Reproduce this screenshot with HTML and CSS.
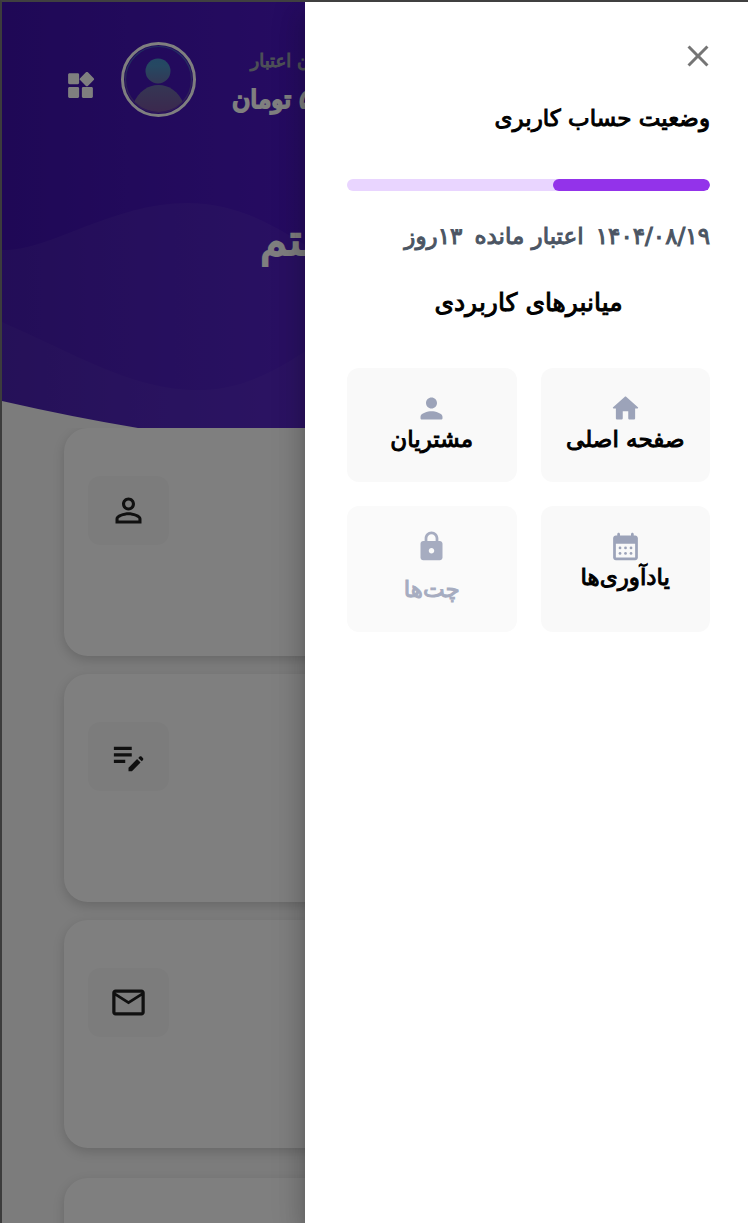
FILE: index.html
```html
<!DOCTYPE html>
<html lang="fa" dir="ltr">
<head>
<meta charset="utf-8">
<meta name="viewport" content="width=device-width, initial-scale=1">
<title>وضعیت حساب کاربری</title>
<link rel="stylesheet" href="styles.css">
</head>
<body>
<div class="stage">
  <div class="page">
    <header class="hero">
      <svg class="hero-waves" viewBox="0 0 746 426" preserveAspectRatio="none" aria-hidden="true">
        <defs>
          <linearGradient id="sky" x1="0" y1="0" x2="1" y2="0">
            <stop offset="0" stop-color="#3e11ac"/>
            <stop offset=".4" stop-color="#4c18c4"/>
            <stop offset="1" stop-color="#5c20dc"/>
          </linearGradient>
        </defs>
        <rect width="746" height="426" fill="url(#sky)"/>
        <path fill="#fff" fill-opacity=".045" d="M0 248C45 250 110 201 185 201C245 201 285 232 330 260C420 315 600 300 746 220V426H0Z"/>
        <path fill="#fff" fill-opacity=".03" d="M0 320C70 350 130 388 195 388C245 388 280 365 320 338C440 260 600 300 746 340V426H0Z"/>
        <path fill="#f8f8f8" d="M0 399Q70 415 136 426H0Z"/>
      </svg>
      <div class="topbar">
        <button class="apps" type="button" aria-label="منو">
          <svg viewBox="0 0 24 24"><path d="M13 14v6c0 .55.45 1 1 1h6c.55 0 1-.45 1-1v-6c0-.55-.45-1-1-1h-6c-.55 0-1 .45-1 1zM4 21h6c.55 0 1-.45 1-1v-6c0-.55-.45-1-1-1H4c-.55 0-1 .45-1 1v6c0 .55.45 1 1 1zM3 4v6c0 .55.45 1 1 1h6c.55 0 1-.45 1-1V4c0-.55-.45-1-1-1H4c-.55 0-1 .45-1 1zm12.95-1.6L11.7 6.64c-.39.39-.39 1.02 0 1.41l4.24 4.25c.39.39 1.02.39 1.41 0l4.25-4.25c.39-.39.39-1.02 0-1.41L17.37 2.4c-.39-.39-1.03-.39-1.42 0z"/></svg>
        </button>
        <svg class="avatar" viewBox="0 0 75 75" aria-hidden="true">
          <defs>
            <linearGradient id="face" gradientUnits="userSpaceOnUse" x1="0" y1="4" x2="0" y2="71">
              <stop offset="0" stop-color="#3f8fd0"/>
              <stop offset=".3" stop-color="#4c90c4"/>
              <stop offset=".6" stop-color="#6a6ca8"/>
              <stop offset="1" stop-color="#78509c"/>
            </linearGradient>
            <clipPath id="disc"><circle cx="37.500" cy="37.500" r="32.500"/></clipPath>
          </defs>
          <circle cx="37.500" cy="37.500" r="36" fill="none" stroke="#fff" stroke-width="3"/>
          <circle cx="37.500" cy="37.500" r="33" fill="none" stroke="url(#face)" stroke-opacity=".6" stroke-width="1.200"/>
          <circle cx="37" cy="29" r="12.500" fill="url(#face)"/>
          <path clip-path="url(#disc)" fill="url(#face)" d="M12 62C18 49 27 43 37.500 43S57 49 63 62V75H12Z"/>
        </svg>
        <div class="credit" dir="rtl">
          <span class="credit-label">ن اعتبار</span>
          <strong class="credit-value">۵ تومان</strong>
        </div>
      </div>
      <h1 class="hero-title" dir="rtl">سیستم</h1>
    </header>
    <main class="cards">
      <section class="card">
        <span class="tile"><svg viewBox="0 0 24 24"><path d="M12 5.900c1.160 0 2.100.94 2.100 2.100s-.94 2.100-2.100 2.100S9.900 9.160 9.900 8s.94-2.100 2.100-2.100m0 9c2.970 0 6.100 1.460 6.100 2.100v1.100H5.900V17c0-.64 3.130-2.100 6.100-2.100M12 4C9.790 4 8 5.790 8 8s1.790 4 4 4 4-1.790 4-4-1.790-4-4-4zm0 9c-2.670 0-8 1.340-8 4v3h16v-3c0-2.660-5.330-4-8-4z"/></svg></span>
      </section>
      <section class="card">
        <span class="tile"><svg viewBox="0 0 24 24"><path d="M3 10h11v2H3v-2zm0-2h11V6H3v2zm0 8h7v-2H3v2zm15.010-3.130.71-.71c.39-.39 1.020-.39 1.410 0l.71.71c.39.39.39 1.020 0 1.410l-.71.71-2.120-2.120zm-.71.71-5.300 5.300V21h2.120l5.300-5.300-2.120-2.120z"/></svg></span>
      </section>
      <section class="card">
        <span class="tile"><svg viewBox="0 0 24 24"><path d="M20 4H4c-1.100 0-2 .9-2 2v12c0 1.100.9 2 2 2h16c1.100 0 2-.9 2-2V6c0-1.100-.9-2-2-2zm0 14H4V8l8 5 8-5v10zm-8-7L4 6h16l-8 5z"/></svg></span>
      </section>
      <section class="card card-last"></section>
    </main>
  </div>

  <div class="backdrop"></div>

  <aside class="drawer" dir="rtl" aria-label="وضعیت حساب کاربری">
    <button class="close" type="button" aria-label="بستن">
      <svg viewBox="0 0 24 24"><path d="M19 6.410 17.590 5 12 10.590 6.410 5 5 6.410 10.590 12 5 17.590 6.410 19 12 13.410 17.590 19 19 17.590 13.410 12z"/></svg>
    </button>
    <h2 class="status-title"><label for="account-credit">وضعیت حساب کاربری</label></h2>
    <progress class="meter" id="account-credit" max="363" value="157"></progress>
    <p class="expiry"><span>۱۴۰۴/۰۸/۱۹</span><span>اعتبار مانده</span><span>۱۳روز</span></p>
    <h2 class="shortcuts-title">میانبرهای کاربردی</h2>
    <nav class="shortcuts">
      <a class="shortcut" href="#home">
        <svg viewBox="0 0 24 24"><path d="M10 19v-5h4v5c0 .55.45 1 1 1h3c.55 0 1-.45 1-1v-7h1.700c.46 0 .68-.57.33-.87L12.670 3.600c-.38-.34-.96-.34-1.340 0l-8.360 7.530c-.34.3-.13.87.33.87H5v7c0 .55.45 1 1 1h3c.55 0 1-.45 1-1z"/></svg>
        <span>صفحه اصلی</span>
      </a>
      <a class="shortcut" href="#customers">
        <svg viewBox="0 0 24 24"><path d="M12 12c2.210 0 4-1.790 4-4s-1.790-4-4-4-4 1.790-4 4 1.790 4 4 4zm0 2c-2.670 0-8 1.340-8 4v1c0 .55.45 1 1 1h14c.55 0 1-.45 1-1v-1c0-2.660-5.330-4-8-4z"/></svg>
        <span>مشتریان</span>
      </a>
      <a class="shortcut" href="#reminders">
        <svg viewBox="0 0 24 24"><path d="M19 4h-1V3c0-.55-.45-1-1-1s-1 .45-1 1v1H8V3c0-.55-.45-1-1-1s-1 .45-1 1v1H5c-1.110 0-2 .9-2 2v14c0 1.100.89 2 2 2h14c1.100 0 2-.9 2-2V6c0-1.100-.9-2-2-2zm0 16H5V10h14v10z"/><circle cx="8" cy="13" r="1"/><circle cx="12" cy="13" r="1"/><circle cx="16" cy="13" r="1"/><circle cx="8" cy="17" r="1"/><circle cx="12" cy="17" r="1"/><circle cx="16" cy="17" r="1"/></svg>
        <span>یادآوری‌ها</span>
      </a>
      <a class="shortcut shortcut-locked" href="#chats" aria-disabled="true">
        <svg viewBox="0 0 24 24"><path d="M18 8h-1V6c0-2.760-2.240-5-5-5S7 3.240 7 6v2H6c-1.100 0-2 .9-2 2v10c0 1.100.9 2 2 2h12c1.100 0 2-.9 2-2V10c0-1.100-.9-2-2-2zm-6 9c-1.100 0-2-.9-2-2s.9-2 2-2 2 .9 2 2-.9 2-2 2zM9 8V6c0-1.660 1.340-3 3-3s3 1.340 3 3v2H9z"/></svg>
        <span>چت‌ها</span>
      </a>
    </nav>
  </aside>
</div>
</body>
</html>
```

FILE: styles.css
```css
* {
  box-sizing: border-box;
}

body {
  margin: 0;
  font-family: "DejaVu Sans", sans-serif;
  color: #000;
  background: #f8f8f8;
}

h1, h2, p {
  margin: 0;
}

button {
  padding: 0;
  border: 0;
  background: none;
  cursor: pointer;
}

svg {
  display: block;
  flex: none;
}

.stage {
  position: relative;
  height: 100vh;
  overflow: hidden;
  border-top: 2px solid #404040;
  border-left: 2px solid #3c3c3c;
}

/* Dashboard */
.hero {
  position: relative;
  height: 426px;
  padding: 40px 62px 0;
  color: #fff;
}

.hero-waves {
  position: absolute;
  inset: 0;
  width: 100%;
  height: 100%;
}

.topbar {
  position: relative;
  display: flex;
  align-items: flex-start;
}

.apps {
  margin: 27px 24px 0 0;
}

.apps svg {
  width: 33px;
  height: 33px;
  fill: #fff;
}

.avatar {
  width: 75px;
  height: 75px;
}

.credit {
  display: flex;
  flex-direction: column;
  align-items: center;
  margin-left: 36px;
  white-space: nowrap;
}

.credit-label {
  padding-left: 16px;
  font-size: 18px;
  line-height: 38px;
  color: #9ca3af;
  -webkit-text-stroke: 1px #9ca3af;
}

.credit-value {
  font-size: 25px;
  font-weight: 400;
  line-height: 40px;
  -webkit-text-stroke: 2px currentColor;
}

.hero-title {
  position: relative;
  margin-top: 88px;
  padding-left: 196px;
  font-size: 44px;
  font-weight: 400;
  line-height: 64px;
  text-align: left;
  -webkit-text-stroke: 2px currentColor;
}

.cards {
  display: flex;
  flex-direction: column;
  gap: 18px;
  padding: 0 62px;
}

.card {
  padding: 48px 24px;
  min-height: 228px;
  border-radius: 24px;
  background: #fff;
  box-shadow: 0 4px 12px rgba(0, 0, 0, 0.16);
}

.card-last {
  margin-top: 12px;
}

.tile {
  display: flex;
  align-items: center;
  justify-content: center;
  width: 81px;
  height: 69px;
  border-radius: 12px;
  background: #f9f9f9;
}

.tile svg {
  width: 39px;
  height: 39px;
  fill: #212121;
}

.backdrop {
  position: absolute;
  inset: 0;
  background: rgba(0, 0, 0, 0.5);
}

/* Account drawer */
.drawer {
  position: absolute;
  inset: 0 0 0 auto;
  display: flex;
  flex-direction: column;
  width: 443px;
  max-width: 100%;
  padding: 36px 38px 36px 42px;
  overflow-y: auto;
  background: #fff;
  box-shadow: 0 8px 10px -5px rgba(0, 0, 0, 0.2),
    0 16px 24px 2px rgba(0, 0, 0, 0.14),
    0 6px 30px 5px rgba(0, 0, 0, 0.12);
}

.close {
  align-self: flex-start;
  margin-right: -6px;
}

.close svg {
  width: 36px;
  height: 36px;
  fill: #757575;
}

.status-title,
.expiry,
.shortcuts-title,
.shortcut {
  font-weight: 400;
  -webkit-text-stroke: 1px currentColor;
}

.status-title {
  margin-top: 24px;
  font-size: 23px;
  line-height: 40px;
}

.meter {
  display: block;
  appearance: none;
  width: 100%;
  height: 12px;
  margin-top: 41px;
  border: 0;
  border-radius: 6px;
  overflow: hidden;
  background: #e9d5ff;
}

.meter::-webkit-progress-bar {
  background: #e9d5ff;
}

.meter::-webkit-progress-value {
  border-radius: 6px;
  background: #9333ea;
}

.expiry {
  display: flex;
  gap: 12px;
  margin-top: 25px;
  font-size: 23px;
  line-height: 40px;
  white-space: nowrap;
  color: #4b5563;
}

.shortcuts-title {
  margin-top: 27px;
  font-size: 25px;
  line-height: 40px;
  text-align: center;
}

.shortcuts {
  display: grid;
  grid-template-columns: 1fr 1fr;
  gap: 24px;
  margin-top: 45px;
}

.shortcut {
  display: flex;
  flex-direction: column;
  align-items: center;
  padding: 24px 12px 28px;
  border-radius: 12px;
  background: #f9f9f9;
  color: #000;
  font-size: 23px;
  line-height: 29px;
  white-space: nowrap;
  text-decoration: none;
}

.shortcut svg {
  width: 33px;
  height: 33px;
  fill: #9ca3b9;
}

.shortcut-locked {
  gap: 12px;
  background: #fafafa;
  color: #a6acc0;
}

.shortcut-locked svg {
  fill: #a6acc0;
}
```
